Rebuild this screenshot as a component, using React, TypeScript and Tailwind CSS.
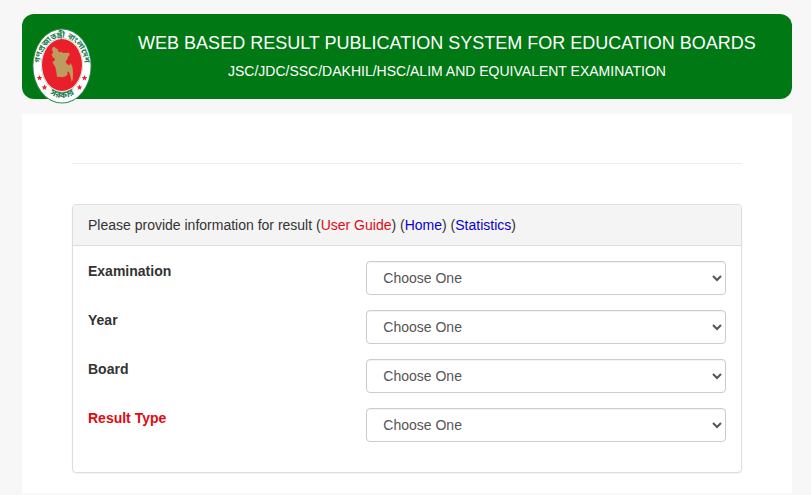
const fields = [
  { id: "exam", label: "Examination", labelColor: "text-[#333333]" },
  { id: "year", label: "Year", labelColor: "text-[#333333]" },
  { id: "board", label: "Board", labelColor: "text-[#333333]" },
  { id: "result_type", label: "Result Type", labelColor: "text-[#dd0b12]" },
];

const stars = [
  { x: 7.5, y: 50 },
  { x: 12.5, y: 59.5 },
  { x: 52.5, y: 50 },
  { x: 47.5, y: 59.5 },
];

function Seal() {
  return (
    <svg
      viewBox="0 0 60 76"
      role="img"
      aria-label="Government seal"
      className="block h-[76px] w-[60px]"
    >
      <defs>
        <path id="seal-top" d="M9 48 A22.3 28.8 0 1 1 51 48" />
        <path id="seal-bottom" d="M10 58 A26 33 0 0 0 50 58" />
      </defs>
      <ellipse cx="30" cy="38" rx="29.5" ry="37.5" fill="#2f8f52" />
      <ellipse cx="30" cy="38" rx="28.6" ry="36.6" fill="#ffffff" />
      <ellipse cx="30" cy="37" rx="21" ry="27.2" fill="#8cc7a3" />
      <ellipse cx="30" cy="37" rx="20.6" ry="26.8" fill="#ffffff" />
      <ellipse cx="30" cy="37" rx="20" ry="26" fill="#e9202b" />
      <path
        d="M20.5 19.5 L22.5 18.7 L24 20.5 L25.5 21 L26.5 23.5 L28 24.5 L29 23.5 L31 25 L37 24.8 L37.8 26.5 L36 29 L35.5 31 L33.5 33.5 L35 36 L37.5 37.5 L38.3 35 L40.3 38 L41 44 L40.8 51 L39.8 54 L38.5 48.5 L37 44 L35.5 43.5 L35.3 47 L33 48.5 L30 49.3 L27 48.7 L25 49 L24.2 43 L23.3 39 L22 37 L20.5 34 L22.5 32.5 L23 31 L21 29.5 L19.5 26.5 L21.3 24.5 L20 22 Z"
        fill="#bd9c5f"
      />
      <text
        className="font-['Noto_Sans_Bengali','Noto_Sans',sans-serif]"
        fontSize="8"
        fontWeight="700"
        fill="#1d7c4c"
        textAnchor="middle"
      >
        <textPath href="#seal-top" startOffset="50%">
          গণপ্রজাতন্ত্রী বাংলাদেশ
        </textPath>
      </text>
      <text
        className="font-['Noto_Sans_Bengali','Noto_Sans',sans-serif]"
        fontSize="9"
        fontWeight="700"
        fill="#1d7c4c"
        textAnchor="middle"
      >
        <textPath href="#seal-bottom" startOffset="50%">
          সরকার
        </textPath>
      </text>
      {stars.map((s) => (
        <path
          key={`${s.x}-${s.y}`}
          transform={`translate(${s.x} ${s.y})`}
          d="M0 -3 L0.8 -0.9 L2.9 -0.9 L1.2 0.5 L1.8 2.6 L0 1.3 L-1.8 2.6 L-1.2 0.5 L-2.9 -0.9 L-0.8 -0.9 Z"
          fill="#e9202b"
        />
      ))}
    </svg>
  );
}

export default function App() {
  return (
    <div className="min-h-screen bg-[#f7f7f7] pt-3.5 pr-[19px] pl-[22px] font-['Liberation_Sans',Arial,sans-serif] text-sm leading-5 text-[#333333]">
      <header className="flex h-[85px] items-start rounded-xl bg-[#007814] text-white">
        <div className="w-20 shrink-0 pt-3.5 pl-2.5">
          <Seal />
        </div>
        <div className="flex-1 pt-[17px] text-center">
          <h1 className="text-lg leading-6">
            WEB BASED RESULT PUBLICATION SYSTEM FOR EDUCATION BOARDS
          </h1>
          <p className="pt-1.5">
            JSC/JDC/SSC/DAKHIL/HSC/ALIM AND EQUIVALENT EXAMINATION
          </p>
        </div>
      </header>

      <main className="mt-[15px] bg-white px-[50px] pt-[49px] pb-5">
        <hr className="border-[#eeeeee]" />

        <section className="mt-10 rounded border border-[#dddddd] shadow-xs">
          <div className="rounded-t border-b border-[#dddddd] bg-[#f4f4f4] px-[15px] py-2.5">
            Please provide information for result (
            <a href="#guide" className="text-[#dd0b12]">
              User Guide
            </a>
            ) (
            <a href="#home" className="text-[#0b00cc]">
              Home
            </a>
            ) (
            <a href="#statistics" className="text-[#0b00cc]">
              Statistics
            </a>
            )
          </div>

          <form className="flex flex-col gap-[15px] pt-[15px] pb-[30px]">
            {fields.map((field) => (
              <div key={field.id} className="grid grid-cols-12">
                <div className="col-span-5 px-[15px]">
                  <label
                    htmlFor={field.id}
                    className={`font-bold ${field.labelColor}`}
                  >
                    {field.label}
                  </label>
                </div>
                <div className="col-span-7 px-[15px]">
                  <select
                    id={field.id}
                    className="block h-[34px] w-full rounded border border-[#cccccc] bg-white pl-3 text-[#555555] inset-shadow-xs"
                  >
                    <option>Choose One</option>
                  </select>
                </div>
              </div>
            ))}
          </form>
        </section>
      </main>
    </div>
  );
}
